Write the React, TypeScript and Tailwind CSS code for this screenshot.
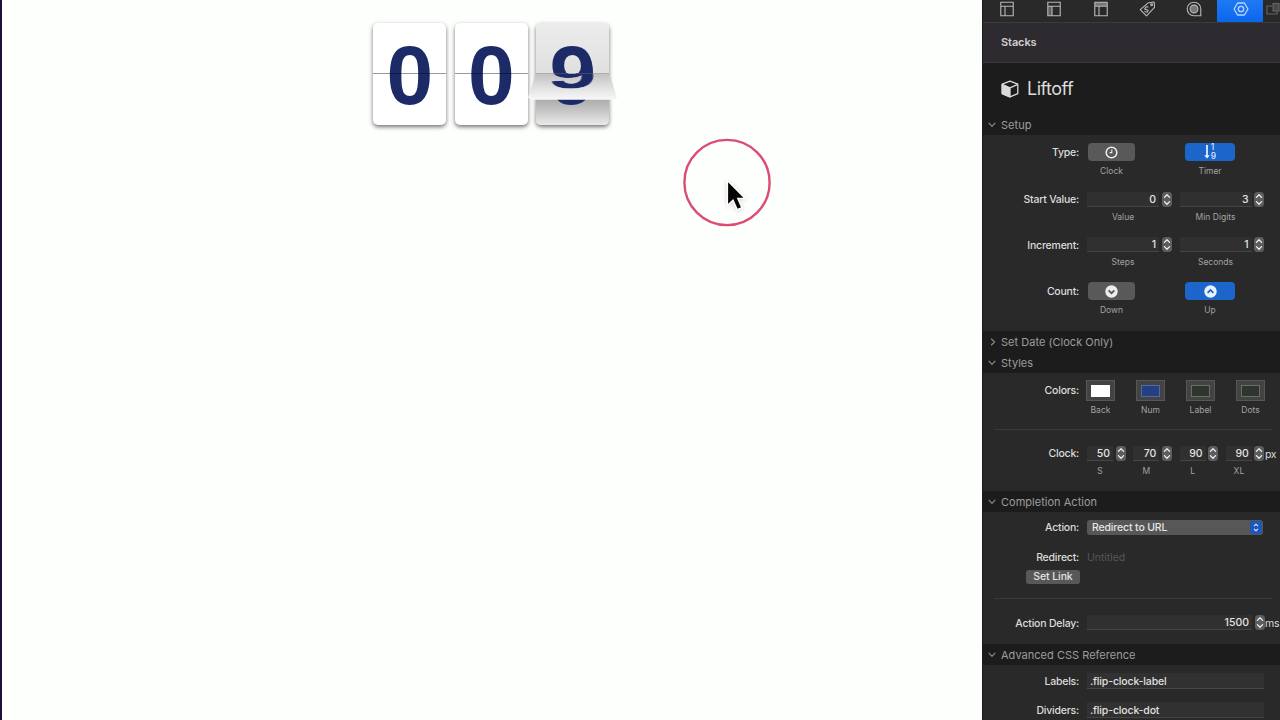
import type { ReactNode } from 'react';

interface SectionProps {
  title: string;
  open?: boolean;
  className?: string;
}

function SectionHeader({ title, open = true, className = 'h-[21px]' }: SectionProps) {
  return (
    <div className={`flex shrink-0 items-center bg-[#1c1c1c] pl-1 ${className}`}>
      <svg className="h-3 w-3" viewBox="0 0 12 12" fill="none" stroke="#8b8b8b" strokeWidth="1.1" strokeLinecap="round" strokeLinejoin="round">
        <path d={open ? 'M2 4.2 5 7.4 8 4.2' : 'M4.4 3 7.6 6 4.4 9'} />
      </svg>
      <span className="ml-[2px] text-[11px] leading-[16px] tracking-[0.02px] text-[#9c9c9c]">{title}</span>
    </div>
  );
}

interface RowProps {
  label: string;
  className?: string;
  labelClass?: string;
  children?: ReactNode;
}

function Row({ label, className = '', labelClass = 'pt-[1px]', children }: RowProps) {
  return (
    <div className={`flex ${className}`}>
      <span className={`w-[96px] shrink-0 text-right text-[10.5px] font-medium leading-[16px] tracking-[-0.22px] text-[#dcdcdc] ${labelClass}`}>
        {label}
      </span>
      <div className="ml-2 flex shrink-0">{children}</div>
    </div>
  );
}

function Stepper() {
  return (
    <svg className="ml-[2.5px] h-[15px] w-[10px] shrink-0" viewBox="0 0 10 15" fill="none">
      <rect width="10" height="15" rx="3.5" fill="#5d5d5d" />
      <path d="M2.4 5.4 5 2.8 7.6 5.4M2.4 9.6 5 12.2 7.6 9.6" stroke="#eee" strokeWidth="1.3" strokeLinecap="round" strokeLinejoin="round" />
    </svg>
  );
}

interface NumberFieldProps {
  value: string;
  caption?: string;
  width: string;
}

function NumberField({ value, caption, width }: NumberFieldProps) {
  return (
    <div className="flex">
      <div className={width}>
        <div className="flex h-[15px] items-center justify-end border-b border-[#454545] bg-[#303030] pr-[3px] pt-[2px] text-[10.5px] font-medium text-[#e4e4e4]">
          {value}
        </div>
        {caption && <Caption className="mt-[4px]">{caption}</Caption>}
      </div>
      <Stepper />
    </div>
  );
}

function Caption({ children, className = '' }: { children: ReactNode; className?: string }) {
  return (
    <div className={`whitespace-nowrap text-center text-[8.5px] leading-[12px] text-[#a2a2a2] ${className}`}>
      {children}
    </div>
  );
}

interface ToggleProps {
  caption: string;
  active?: boolean;
  className: string;
  children: ReactNode;
}

function Toggle({ caption, active, className, children }: ToggleProps) {
  return (
    <div className={className}>
      <div className={`flex h-[18px] items-center justify-center rounded-[4px] ${active ? 'bg-[#1b65cb]' : 'bg-[#595959]'}`}>
        {children}
      </div>
      <Caption className="mt-[4px]">{caption}</Caption>
    </div>
  );
}

const swatches = [
  { name: 'Back', color: 'bg-white border-white' },
  { name: 'Num', color: 'bg-[#243f83] border-[#536aa0]' },
  { name: 'Label', color: 'bg-[#2e352e] border-[#667066]' },
  { name: 'Dots', color: 'bg-[#2e352e] border-[#667066]' },
];

const clockSizes = [
  { name: 'S', value: '50' },
  { name: 'M', value: '70' },
  { name: 'L', value: '90' },
  { name: 'XL', value: '90' },
];

function Divider({ className = '' }: { className?: string }) {
  return <div className={`ml-[11px] mr-2 h-px shrink-0 bg-[#3a3a3a] ${className}`} />;
}

function Unit({ children }: { children: ReactNode }) {
  return <span className="ml-[0.5px] pt-[1px] text-[10.5px] leading-[15px] tracking-[-0.3px] text-[#dcdcdc]">{children}</span>;
}

function LayoutIcon({ variant }: { variant: 'plain' | 'side' | 'top' }) {
  return (
    <svg className="h-[16px] w-[14px]" viewBox="0 0 14 16" fill="none" stroke="#b9b9b9" strokeWidth="1.1">
      {variant === 'side' && <rect x="1" y="5" width="4" height="10" fill="#606060" stroke="none" />}
      {variant === 'top' && <rect x="1" y="1" width="12" height="4" fill="#777" stroke="none" />}
      <path d="M.8 1.2h12.4v13.6H.8zM.8 5.2h12.4M5 5.2v9.6" />
    </svg>
  );
}

function Toolbar() {
  return (
    <div className="flex h-[22px] shrink-0 bg-[#292929]">
      <div className="flex w-[47px] justify-center pt-[1px]"><LayoutIcon variant="plain" /></div>
      <div className="flex w-[47px] justify-center pt-[1px]"><LayoutIcon variant="side" /></div>
      <div className="flex w-[47px] justify-center pt-[1px]"><LayoutIcon variant="top" /></div>
      <div className="flex w-[47px] justify-center pt-[1px]">
        <svg className="h-[16px] w-[17px]" viewBox="0 0 17 16" fill="none" stroke="#b9b9b9" strokeWidth="1.1" strokeLinejoin="round">
          <path d="M9.2 1.8 15.2 1l.3 5.4-8 8.4L1.2 8.6z" />
          <circle cx="12.6" cy="3.8" r=".9" />
          <path d="M9.5 6 7 5.8 5.7 8.1l3.6 1.1L8 11.2l-2.6-.7" />
        </svg>
      </div>
      <div className="flex w-[46px] justify-center pt-[1px]">
        <svg className="h-[16px] w-[16px]" viewBox="0 0 16 16" fill="none" stroke="#b9b9b9" strokeWidth="1.1">
          <path d="M14.8 8A6.8 6.8 0 1 0 8 14.8h6.8z" />
          <circle cx="8" cy="8" r="3.9" fill="#777" />
        </svg>
      </div>
      <div className="flex w-[46px] justify-center bg-linear-to-b from-[#2079f3] to-[#0866ee] pl-[2px] pt-[1px]">
        <svg className="h-[16px] w-[16px]" viewBox="0 0 16 16" fill="none" stroke="#b9d5ff" strokeWidth="1.3" strokeLinejoin="round">
          <path d="M4.6 2h6.8L14.9 8l-3.5 6H4.6L1.1 8z" />
          <circle cx="8" cy="8" r="2.7" />
        </svg>
      </div>
      <svg className="ml-[3px] mt-[2px] h-[14px] w-[14px]" viewBox="0 0 14 14" fill="none" stroke="#666" strokeWidth="1.1">
        <path d="M6 4H1v8h10V9" />
        <rect x="7" y="1.5" width="6" height="7.5" fill="#484848" />
      </svg>
    </div>
  );
}

function Inspector() {
  return (
    <aside className="flex h-[720px] w-[298px] shrink-0 flex-col overflow-hidden border-l border-[#1a1a1a] bg-[#292929]">
      <Toolbar />
      <div className="flex h-[41px] shrink-0 items-center border-y border-[#3b3a3d] bg-[#2d2a30] pl-[18px] text-[11px] font-semibold tracking-[-0.1px] text-[#cfcfcf]">
        Stacks
      </div>
      <div className="flex h-[52px] shrink-0 items-center bg-[#1c1c1c] pl-[18px]">
        <svg className="h-[18px] w-[18px]" viewBox="0 0 18 18" fill="none" stroke="#dadada" strokeWidth="1.3" strokeLinejoin="round">
          <path d="M9 1.2 16.8 4.2v9.4L9 16.8 1.2 13.6V4.2z" />
          <path d="M1.2 4.4 9 7.8v9L1.2 13.6z" fill="#dadada" />
          <path d="M9 7.8 16.8 4.4" />
        </svg>
        <span className="-mt-[2px] ml-2 text-[18px] tracking-[-0.5px] text-[#dcdcdc]">Liftoff</span>
      </div>

      <SectionHeader title="Setup" className="h-[20px]" />
      <div className="h-[196px] shrink-0 pt-[8px]">
        <Row label="Type:" className="h-[49px]" labelClass="pt-[2px]">
          <Toggle caption="Clock" className="ml-[1px] w-[47px]">
            <svg className="h-[13px] w-[13px]" viewBox="0 0 13 13" fill="none" stroke="#eee" strokeWidth="1.5">
              <circle cx="6.5" cy="6.5" r="5.3" />
              <path d="M6.8 3.6v3H4.6" strokeWidth="1.1" />
            </svg>
          </Toggle>
          <Toggle caption="Timer" active className="ml-[50px] w-[50px]">
            <svg className="h-[16px] w-[6px]" viewBox="0 0 6 16" fill="none" stroke="#eef4ff">
              <path d="M3 1v12" strokeWidth="1.7" />
              <path d="M.7 11.5 3 14.3l2.3-2.8z" fill="#eef4ff" strokeWidth=".5" />
            </svg>
            <div className="ml-[1px] flex flex-col text-[8.5px] font-medium leading-[9px] text-[#dfeaff]">
              <span>1</span>
              <span>9</span>
            </div>
          </Toggle>
        </Row>
        <Row label="Start Value:" className="h-[45px]" labelClass="">
          <NumberField value="0" caption="Value" width="w-[72px]" />
          <div className="ml-[8px]"><NumberField value="3" caption="Min Digits" width="w-[72px]" /></div>
        </Row>
        <Row label="Increment:" className="h-[45px]">
          <NumberField value="1" caption="Steps" width="w-[72px]" />
          <div className="ml-[8px]"><NumberField value="1" caption="Seconds" width="w-[72px]" /></div>
        </Row>
        <Row label="Count:" labelClass="pt-[2px]">
          <Toggle caption="Down" className="ml-[1px] w-[47px]">
            <svg className="h-[13px] w-[13px]" viewBox="0 0 13 13" fill="none">
              <circle cx="6.5" cy="6.5" r="6.2" fill="#ededed" />
              <path d="M3.6 5.3 6.5 8.2l2.9-2.9" stroke="#555" strokeWidth="1.7" />
            </svg>
          </Toggle>
          <Toggle caption="Up" active className="ml-[50px] w-[50px]">
            <svg className="h-[13px] w-[13px]" viewBox="0 0 13 13" fill="none">
              <circle cx="6.5" cy="6.5" r="6.2" fill="#e9f1ff" />
              <path d="M3.6 7.8 6.5 4.9l2.9 2.9" stroke="#1b62c4" strokeWidth="1.7" />
            </svg>
          </Toggle>
        </Row>
      </div>

      <SectionHeader title="Set Date (Clock Only)" open={false} />
      <SectionHeader title="Styles" />
      <div className="h-[118px] shrink-0 pt-[7px]">
        <Row label="Colors:" className="h-[49px]" labelClass="pt-[3px]">
          <div className="-ml-px flex gap-[21px]">
            {swatches.map((swatch) => (
              <div key={swatch.name} className="w-[29px]">
                <div className="flex h-[21px] items-center justify-center border border-[#565656] bg-[#434343]">
                  <div className={`h-[12px] w-[19px] border ${swatch.color}`} />
                </div>
                <Caption className="mt-[3px]">{swatch.name}</Caption>
              </div>
            ))}
          </div>
        </Row>
        <Divider />
        <Row label="Clock:" className="mt-[16px]" labelClass="">
          <div className="flex gap-[7.8px]">
            {clockSizes.map((size) => (
              <NumberField key={size.name} value={size.value} caption={size.name} width="w-[26px]" />
            ))}
          </div>
          <Unit>px</Unit>
        </Row>
      </div>

      <SectionHeader title="Completion Action" />
      <div className="h-[132px] shrink-0 pt-[8px]">
        <Row label="Action:" className="h-[29px]" labelClass="">
          <div className="flex h-[15px] w-[176px] items-center justify-between rounded-[3px] bg-[#575757] pl-[5px] pr-[1px] text-[10.5px] font-medium tracking-[-0.15px] text-[#e4e4e4]">
            Redirect to URL
            <svg className="h-[13px] w-[12px]" viewBox="0 0 12 13" fill="none">
              <rect width="12" height="13" rx="3" fill="#1d57bb" />
              <path d="M4 5.2 6 3.2l2 2M4 7.8l2 2 2-2" stroke="#e6efff" strokeWidth="1.1" />
            </svg>
          </div>
        </Row>
        <Row label="Redirect:" className="h-[21px]">
          <span className="pt-[1px] text-[10.5px] leading-[16px] tracking-[-0.05px] text-[#575757]">Untitled</span>
        </Row>
        <div className="ml-[43px] flex h-[14px] w-[54px] items-center justify-center rounded-[3px] bg-[#585858] text-[10.5px] font-medium tracking-[-0.1px] text-[#e4e4e4]">
          Set Link
        </div>
        <Divider className="mt-[14px]" />
        <Row label="Action Delay:" className="mt-[16px]">
          <NumberField value="1500" width="w-[165px]" />
          <Unit>ms</Unit>
        </Row>
      </div>

      <SectionHeader title="Advanced CSS Reference" />
      <div className="pt-[8px]">
        {[['Labels:', '.flip-clock-label'], ['Dividers:', '.flip-clock-dot']].map(([label, value]) => (
          <Row key={label} label={label} className="h-[29px]">
            <div className="flex h-[16px] w-[177px] items-center border-b border-[#454545] bg-[#313131] pl-[3px] pt-[2px] text-[10.5px] font-medium tracking-[-0.15px] text-[#e0e0e0]">
              {value}
            </div>
          </Row>
        ))}
      </div>
    </aside>
  );
}

const cardClass = 'relative h-[102px] w-[73px] shrink-0 overflow-hidden rounded-[5px] shadow-[0_2px_4px_rgba(0,0,0,0.55)]';
const digitClass = "text-center font-['Liberation_Sans',sans-serif] text-[84px] font-bold leading-[105px] text-[#1c2a67]";

function Card({ digit }: { digit: string }) {
  return (
    <div className={`${cardClass} bg-white`}>
      <div className={digitClass}>{digit}</div>
      <div className="absolute inset-x-0 top-[50px] h-px bg-black/40" />
    </div>
  );
}

// Last digit, caught with its flap halfway down
function FlippingCard() {
  return (
    <div className="relative">
      <div className={`${cardClass} bg-linear-to-b from-[#ececec] to-[#d4d4d4]`}>
        <div className="absolute inset-x-0 bottom-0 top-[51px] bg-linear-to-b from-[#707070] to-[#eaeaea]" />
        <div className={`relative ${digitClass}`}>9</div>
      </div>
      <div className="absolute inset-x-0 top-[50px] h-[51px] origin-top overflow-hidden rounded-b-[5px] border-t border-[#888] bg-linear-to-b from-[#c0c0c0] to-[#f8f8f8] [transform:perspective(240px)_rotateX(65deg)]">
        <div className={`-mt-[51px] ${digitClass}`}>9</div>
      </div>
    </div>
  );
}

export default function App() {
  return (
    <div className="flex h-[720px] w-[1280px] overflow-hidden bg-[#fcfffb] font-['Inter','Liberation_Sans',sans-serif]">
      <main className="relative flex-1 border-l-2 border-[#1c1036]">
        <div className="flex gap-[8.5px] pl-[371.4px] pt-[23px]">
          <Card digit="0" />
          <Card digit="0" />
          <FlippingCard />
        </div>

        {/* Click highlight around the pointer */}
        <svg className="absolute left-[680px] top-[138px] h-[90px] w-[90px]" viewBox="0 0 90 90" fill="none">
          <circle cx="45" cy="44.5" r="42.6" stroke="#dc4c73" strokeWidth="2.4" />
          <path d="M45.4 42.4v25l5.6-5.2 4.2 9.4 4.7-2-4.1-9.2h7.4z" fill="#050505" stroke="#fff" strokeWidth="1.4" className="drop-shadow-sm" />
        </svg>
      </main>
      <Inspector />
    </div>
  );
}
